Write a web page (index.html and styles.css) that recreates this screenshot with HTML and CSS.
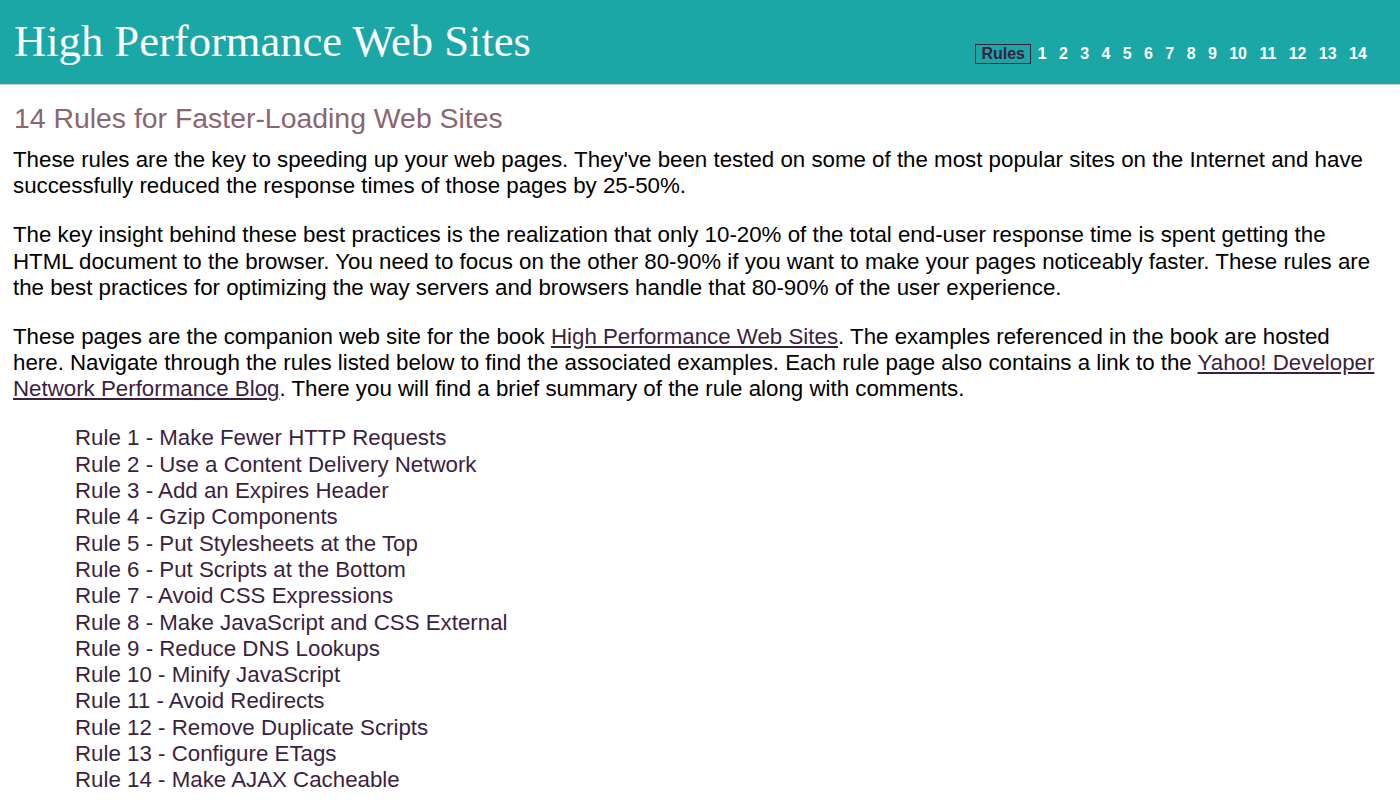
FILE: index.html
```html
<!DOCTYPE html>
<html>
<head>
<meta charset="utf-8">
<title>High Performance Web Sites</title>
<link rel="stylesheet" href="styles.css">
</head>
<body>
<header class="masthead">
  <div class="site-title">High Performance Web Sites</div>
  <nav class="rule-nav">
    <a class="current" href="#">Rules</a>
    <a href="#">1</a><a href="#">2</a><a href="#">3</a><a href="#">4</a><a href="#">5</a><a href="#">6</a><a href="#">7</a><a href="#">8</a><a href="#">9</a><a href="#">10</a><a href="#">11</a><a href="#">12</a><a href="#">13</a><a href="#">14</a>
  </nav>
</header>
<main class="content">
  <h1 class="page-title">14 Rules for Faster-Loading Web Sites</h1>
  <p>These rules are the key to speeding up your web pages. They've been tested on some of the most popular sites on the Internet and have successfully reduced the response times of those pages by 25-50%.</p>
  <p>The key insight behind these best practices is the realization that only 10-20% of the total end-user response time is spent getting the HTML document to the browser. You need to focus on the other 80-90% if you want to make your pages noticeably faster. These rules are the best practices for optimizing the way servers and browsers handle that 80-90% of the user experience.</p>
  <p>These pages are the companion web site for the book <a href="#">High Performance Web Sites</a>. The examples referenced in the book are hosted here. Navigate through the rules listed below to find the associated examples. Each rule page also contains a link to the <a href="#">Yahoo! Developer Network Performance Blog</a>. There you will find a brief summary of the rule along with comments.</p>
  <ul class="rules">
    <li><a href="#">Rule 1 - Make Fewer HTTP Requests</a></li>
    <li><a href="#">Rule 2 - Use a Content Delivery Network</a></li>
    <li><a href="#">Rule 3 - Add an Expires Header</a></li>
    <li><a href="#">Rule 4 - Gzip Components</a></li>
    <li><a href="#">Rule 5 - Put Stylesheets at the Top</a></li>
    <li><a href="#">Rule 6 - Put Scripts at the Bottom</a></li>
    <li><a href="#">Rule 7 - Avoid CSS Expressions</a></li>
    <li><a href="#">Rule 8 - Make JavaScript and CSS External</a></li>
    <li><a href="#">Rule 9 - Reduce DNS Lookups</a></li>
    <li><a href="#">Rule 10 - Minify JavaScript</a></li>
    <li><a href="#">Rule 11 - Avoid Redirects</a></li>
    <li><a href="#">Rule 12 - Remove Duplicate Scripts</a></li>
    <li><a href="#">Rule 13 - Configure ETags</a></li>
    <li><a href="#">Rule 14 - Make AJAX Cacheable</a></li>
  </ul>
</main>
</body>
</html>
```
FILE: styles.css
```css
html, body {
  margin: 0;
  padding: 0;
  background: #ffffff;
}
body {
  font-family: "Liberation Sans", Arial, sans-serif;
  color: #000;
}
.masthead {
  background: #1aa7a6;
  height: 84px;
  border-bottom: 1px solid #c8d0d0;
  display: flex;
  align-items: flex-start;
  justify-content: space-between;
  padding: 0 0 0 14px;
  box-sizing: content-box;
}
.site-title {
  font-family: "Liberation Serif", "Times New Roman", serif;
  color: #ffffff;
  font-size: 44.6px;
  line-height: 1;
  padding-top: 19px;
}
.rule-nav {
  display: flex;
  align-items: center;
  margin-top: 44px;
  margin-right: 27px;
}
.rule-nav a {
  color: #ffffff;
  font-weight: bold;
  font-size: 16px;
  text-decoration: none;
  padding: 0 6.2px;
  line-height: 18px;
}
.rule-nav a.current {
  color: #3b1f3f;
  border: 1px solid #3b1f3f;
  padding: 0 5.5px;
  margin-right: 0;
}
.content {
  padding: 0 14px 0 13px;
}
.page-title {
  font-size: 28.4px;
  font-weight: normal;
  color: #8a6670;
  margin: 17px 0 13px 1px;
  line-height: 32px;
}
.content p {
  font-size: 22.3px;
  line-height: 26.3px;
  margin: 0 0 22.7px 0;
}
.content p a {
  color: #3b1f3f;
  text-decoration: underline;
}
.rules {
  list-style: none;
  margin: 0;
  padding: 0 0 0 62px;
}
.rules li {
  font-size: 22.3px;
  line-height: 26.3px;
}
.rules a {
  color: #3b1f3f;
  text-decoration: none;
}
```
